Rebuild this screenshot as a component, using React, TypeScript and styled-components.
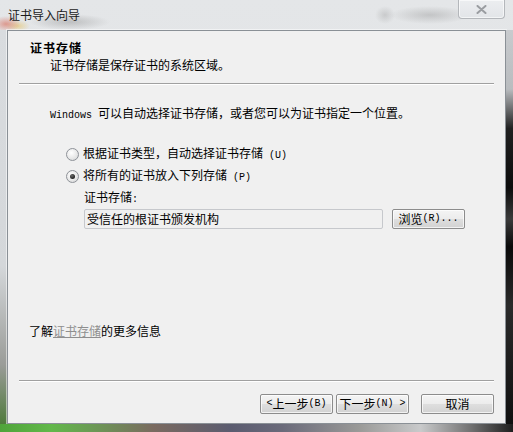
import React from "react";
import styled, { createGlobalStyle } from "styled-components";

const Global = createGlobalStyle`
  html, body { margin: 0; padding: 0; background: #2b2b2b; }
  body { font-family: "Noto Sans CJK SC", "Liberation Sans", sans-serif; font-size: 12px; color: #000; }
`;

const Frame = styled.div`
  width: 513px;
  height: 432px;
  display: flex;
  flex-direction: column;
  overflow: hidden;
  background:
    radial-gradient(ellipse 14px 8px at 6px 24px, rgba(214, 90, 70, 0.55), transparent),
    radial-gradient(ellipse 12px 6px at 18px 26px, rgba(230, 190, 80, 0.5), transparent),
    radial-gradient(ellipse 40px 8px at 70px 22px, rgba(120, 120, 120, 0.35), transparent),
    radial-gradient(ellipse 40px 9px at 430px 15px, rgba(120, 120, 120, 0.3), transparent),
    radial-gradient(ellipse 10px 9px at 385px 15px, rgba(120, 120, 120, 0.25), transparent),
    linear-gradient(180deg, #e4e6e8 0%, #dcdfe2 100%);
`;

const TitleBar = styled.div`
  height: 30px;
  flex: none;
  display: flex;
  justify-content: space-between;
  align-items: flex-start;
  padding-left: 8px;
`;

const TitleText = styled.span`
  margin-top: 7px;
  font-size: 12px;
  line-height: 16px;
  color: #1a1a1a;
`;

const CloseButton = styled.div`
  width: 45px;
  height: 18px;
  margin-right: 8px;
  border: 1px solid #b4b7bb;
  border-top: none;
  border-radius: 0 0 4px 4px;
  background: linear-gradient(180deg, #eceef0 0%, #e2e5e8 100%);
  box-shadow: inset 0 0 0 1px rgba(255, 255, 255, 0.6);
  display: flex;
  align-items: center;
  justify-content: center;
`;

const Middle = styled.div`
  flex: 1;
  display: flex;
  min-height: 0;
`;

const LeftEdge = styled.div`
  width: 7px;
  flex: none;
  background: linear-gradient(180deg, #d9dcdf 0%, #d4d7da 60%, #9a9c98 85%, #4f7a3c 100%);
`;

const RightEdge = styled.div`
  width: 7px;
  flex: none;
  background: linear-gradient(180deg, #c8cbce 0%, #b9bcbf 15%, #202020 25%, #0c0c0c 40%, #3a3a3a 48%, #0a0a0a 55%, #2a2a2a 70%, #101010 100%);
`;

const BottomEdge = styled.div`
  height: 8px;
  flex: none;
  background: linear-gradient(90deg, #4fa43a 0%, #62b84a 10%, #6b9a55 18%, #7a6a60 30%, #5b5c70 45%, #6a6a7a 55%, #9a9a98 70%, #c9cacb 82%, #6f6f6f 92%, #1e1e1e 100%);
`;

const Client = styled.div`
  flex: 1;
  display: flex;
  flex-direction: column;
  background: #f0f0f0;
  border: 1px solid #8a9096;
  box-shadow: 0 0 0 1px rgba(255, 255, 255, 0.5);
`;

const Header = styled.div`
  padding: 9px 0 0 22px;
`;

const HeaderTitle = styled.div`
  font-weight: bold;
  line-height: 16px;
  letter-spacing: 1px;
`;

const HeaderSub = styled.div`
  padding-left: 20px;
  line-height: 16px;
  margin-top: 1px;
`;

const Separator = styled.div<{ $top: number }>`
  height: 1px;
  margin: ${(p) => p.$top}px 11px 0;
  background: #a0a0a0;
  border-bottom: 1px solid #ffffff;
`;

const Body = styled.div`
  flex: 1;
  display: flex;
  flex-direction: column;
  padding-left: 42px;
`;

const Line = styled.div<{ $top: number; $indent?: number }>`
  line-height: 16px;
  margin-top: ${(p) => p.$top}px;
  padding-left: ${(p) => p.$indent ?? 0}px;
  white-space: nowrap;
`;

const Mono = styled.span`
  font-family: "Liberation Mono", monospace;
  font-size: 10px;
`;

const RadioRow = styled.label<{ $top: number }>`
  display: flex;
  align-items: center;
  gap: 4px;
  margin-top: ${(p) => p.$top}px;
  margin-left: 16px;
  line-height: 16px;
  height: 16px;
`;

const RadioCircle = styled.span<{ $checked?: boolean }>`
  width: 11px;
  height: 11px;
  border-radius: 50%;
  border: 1px solid #8e9298;
  background: radial-gradient(circle at 40% 35%, #ffffff 0%, #e8e8e8 55%, #cfd1d3 100%);
  display: flex;
  align-items: center;
  justify-content: center;
  flex: none;
  &::after {
    content: "";
    display: ${(p) => (p.$checked ? "block" : "none")};
    width: 5px;
    height: 5px;
    border-radius: 50%;
    background: radial-gradient(circle at 40% 35%, #6a6a6a 0%, #2a2a2a 60%, #111 100%);
  }
`;

const FieldRow = styled.div`
  display: flex;
  align-items: center;
  gap: 9px;
  margin-top: 1px;
  margin-left: 34px;
`;

const TextBox = styled.div`
  width: 295px;
  height: 18px;
  border: 1px solid #c6c8cc;
  border-radius: 2px;
  background: #f0f0f0;
  line-height: 18px;
  padding-left: 2px;
  box-sizing: content-box;
  white-space: nowrap;
`;

const Button = styled.div<{ $w?: number }>`
  width: ${(p) => p.$w ?? 73}px;
  height: 20px;
  box-sizing: border-box;
  border: 1px solid #8c8c8c;
  border-radius: 2px;
  background: linear-gradient(180deg, #f4f4f4 0%, #ececec 48%, #dedede 52%, #d2d2d2 100%);
  box-shadow: inset 0 0 0 1px rgba(255, 255, 255, 0.7);
  display: flex;
  align-items: center;
  justify-content: center;
  line-height: 16px;
  white-space: nowrap;
  flex: none;
`;

const Spacer = styled.div`
  flex: 1;
`;

const LinkLine = styled.div`
  line-height: 16px;
  padding-left: 21px;
  margin-bottom: 41px;
`;

const Link = styled.span`
  color: #8e8e8e;
  text-decoration: underline;
`;

const Footer = styled.div`
  display: flex;
  justify-content: flex-end;
  align-items: center;
  padding: 12px 11px 9px 0;
`;

const NavGroup = styled.div`
  display: flex;
  gap: 3px;
  margin-right: 12px;
`;

export default function App() {
  return (
    <>
      <Global />
      <Frame>
        <TitleBar>
          <TitleText>证书导入向导</TitleText>
          <CloseButton>
            <svg width="11" height="9" viewBox="0 0 11 9">
              <path d="M1.5 1 L9.5 8 M9.5 1 L1.5 8" stroke="#9a9da1" strokeWidth="2" strokeLinecap="round" />
            </svg>
          </CloseButton>
        </TitleBar>
        <Middle>
          <LeftEdge />
          <Client>
            <Header>
              <HeaderTitle>证书存储</HeaderTitle>
              <HeaderSub>证书存储是保存证书的系统区域。</HeaderSub>
            </Header>
            <Separator $top={10} />
            <Body>
              <Line $top={20}>
                <Mono>Windows </Mono>可以自动选择证书存储，或者您可以为证书指定一个位置。
              </Line>
              <RadioRow $top={22}>
                <RadioCircle />
                <span>
                  根据证书类型，自动选择证书存储<Mono> (U)</Mono>
                </span>
              </RadioRow>
              <RadioRow $top={6}>
                <RadioCircle $checked />
                <span>
                  将所有的证书放入下列存储<Mono> (P)</Mono>
                </span>
              </RadioRow>
              <Line $top={5} $indent={34}>
                证书存储<Mono>:</Mono>
              </Line>
              <FieldRow>
                <TextBox>受信任的根证书颁发机构</TextBox>
                <Button>
                  浏览<Mono> (R)...</Mono>
                </Button>
              </FieldRow>
              <Spacer />
            </Body>
            <LinkLine>
              了解<Link>证书存储</Link>的更多信息
            </LinkLine>
            <Separator $top={0} />
            <Footer>
              <NavGroup>
                <Button>
                  <Mono>&lt; </Mono>上一步<Mono> (B)</Mono>
                </Button>
                <Button>
                  下一步<Mono> (N) &gt;</Mono>
                </Button>
              </NavGroup>
              <Button>取消</Button>
            </Footer>
          </Client>
          <RightEdge />
        </Middle>
        <BottomEdge />
      </Frame>
    </>
  );
}
